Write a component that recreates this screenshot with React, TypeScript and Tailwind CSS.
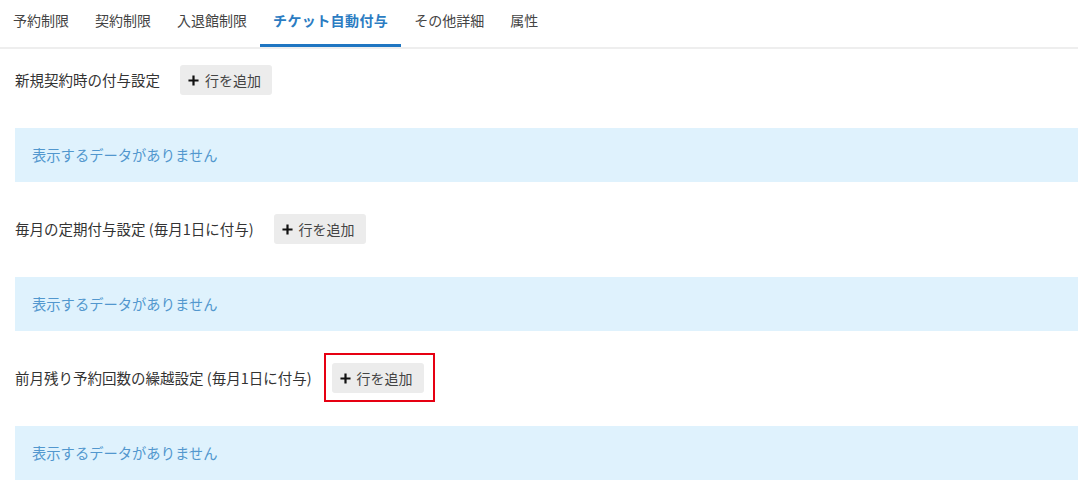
import React from 'react';

const tabs = ['予約制限', '契約制限', '入退館制限', 'チケット自動付与', 'その他詳細', '属性'];
const activeTab = 'チケット自動付与';

const sections: Array<{ label: string; highlight?: boolean }> = [
  { label: '新規契約時の付与設定' },
  { label: '毎月の定期付与設定 (毎月1日に付与)' },
  { label: '前月残り予約回数の繰越設定 (毎月1日に付与)', highlight: true },
];

function PlusIcon() {
  return (
    <svg viewBox="0 0 12 12" className="w-[11px] h-[11px]" aria-hidden>
      <path d="M6 0.5V11.5M0.5 6H11.5" stroke="#111" strokeWidth="2.4" />
    </svg>
  );
}

const AddRowButton: React.FC<{ highlight?: boolean }> = ({ highlight }) => (
  <span className="relative inline-flex">
    <button
      type="button"
      className="flex items-center gap-[6px] h-[30px] w-[92px] pl-[8px] rounded-[3px] bg-[#ececec] text-[14px] text-[#444]"
    >
      <PlusIcon />
      <span>行を追加</span>
    </button>
    {highlight && (
      <span className="absolute -top-[10px] -left-[8px] -right-[11px] -bottom-[9px] border-2 border-[#e60012]" />
    )}
  </span>
);

const App: React.FC = () => {
  return (
    <div
      className="w-[1078px] h-[496px] bg-white overflow-hidden"
      style={{ fontFamily: '"Noto Sans CJK JP", "Noto Sans", sans-serif' }}
    >
      <nav className="flex border-b-2 border-[#eeeeee]">
        {tabs.map((tab) => {
          const active = tab === activeTab;
          return (
            <div
              key={tab}
              className={
                active
                  ? 'h-[47px] px-[13px] pt-[10px] text-[14px] leading-5 font-bold tracking-[0.4px] text-[#2b7cc2] border-b-[3px] border-[#1f76c2]'
                  : 'h-[47px] px-[13px] pt-[10px] text-[14px] leading-5 text-[#444] border-b-[3px] border-transparent'
              }
            >
              {tab}
            </div>
          );
        })}
      </nav>

      <div className="pt-[16px]">
        {sections.map((section, i) => (
          <section key={section.label} className={i > 0 ? 'mt-8' : ''}>
            <div className="flex items-center gap-5 pl-[15px]">
              <span className="text-[14.5px] text-[#333]">{section.label}</span>
              <AddRowButton highlight={section.highlight} />
            </div>
            <div className="ml-[15px] mt-[33px] h-[54px] flex items-center pl-[17px] bg-[#dff2fd] text-[14.3px] text-[#5297ce]">
              表示するデータがありません
            </div>
          </section>
        ))}
      </div>
    </div>
  );
};

export default App;
